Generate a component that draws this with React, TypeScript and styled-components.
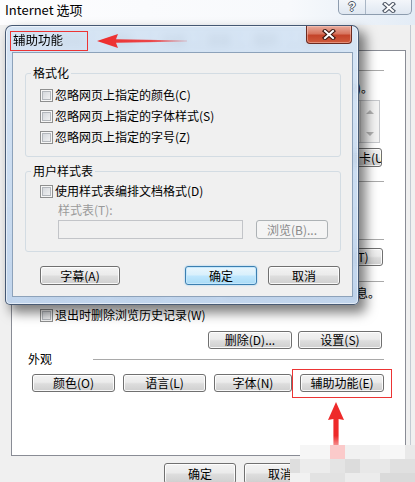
import React from "react";
import styled, { createGlobalStyle, css } from "styled-components";

const FONT = `"Noto Sans CJK SC", "Liberation Sans", sans-serif`;

const GlobalStyle = createGlobalStyle`
  html, body {
    margin: 0;
    padding: 0;
    background: #f0f0f0;
  }
  body {
    font-family: ${FONT};
    font-size: 12px;
    color: #000;
  }
`;

/* ---------- outer window ---------- */

const Window = styled.div`
  position: relative;
  width: 415px;
  height: 482px;
  overflow: hidden;
  background: #f0f0f0;
  display: flex;
  flex-direction: column;
  box-shadow: inset -4px 0 0 #f0f0f0, inset -5px 0 0 #c3cad2;
`;

const TitleBar = styled.div`
  flex: none;
  height: 25px;
  display: flex;
  align-items: flex-start;
  padding-left: 5px;
  background: linear-gradient(to right, #fdfdfe, #f7f9fc 70%, #e3ecf6);
`;

const TitleText = styled.span`
  margin-top: 2px;
  font-size: 13px;
  line-height: 16px;
`;

const CaptionButtons = styled.div`
  margin-left: auto;
  margin-right: 3px;
  height: 14px;
  display: flex;
  border: 1px solid #8d9cae;
  border-top: none;
  border-radius: 0 0 5px 5px;
  overflow: hidden;
  background: linear-gradient(#f3f6fa, #dfe7f1);
`;

const CaptionCell = styled.div<{ $w: number; $split?: boolean }>`
  width: ${(p) => p.$w}px;
  display: flex;
  align-items: center;
  justify-content: center;
  ${(p) => p.$split && "border-left: 1px solid #a9b6c5;"}
`;

const HelpGlyph = styled.span`
  font-family: "Liberation Sans", sans-serif;
  font-weight: bold;
  font-size: 12px;
  line-height: 12px;
  color: #fff;
  text-shadow: -1px 0 #4f5866, 1px 0 #4f5866, 0 -1px #4f5866, 0 1px #4f5866;
`;

const Body = styled.div`
  flex: none;
  display: flex;
  flex-direction: column;
  padding: 0 9px 0 11px;
`;

const TabStrip = styled.div`
  height: 25px;
  display: flex;
  align-items: flex-end;
  padding-left: 2px;
`;

const Tab = styled.div<{ $w: number; $active?: boolean }>`
  box-sizing: border-box;
  width: ${(p) => p.$w}px;
  height: ${(p) => (p.$active ? 22 : 20)}px;
  margin-right: -1px;
  border: 1px solid #898c95;
  border-bottom: none;
  text-align: center;
  line-height: 18px;
  background: ${(p) => (p.$active ? "#fff" : "linear-gradient(#f3f3f3, #e3e3e3)")};
`;

const TabPage = styled.div`
  box-sizing: border-box;
  height: 406px;
  border: 1px solid #898c95;
  background: #fff;
  padding: 12px 21px 0 16px;
  display: flex;
  flex-direction: column;
`;

const SectionHead = styled.div<{ $mt: number }>`
  display: grid;
  grid-template-columns: 65px 1fr;
  align-items: center;
  height: 14px;
  line-height: 14px;
  margin-top: ${(p) => p.$mt}px;
`;

const Rule = styled.div`
  height: 1px;
  background: #a9a9a9;
`;

const TextLine = styled.div<{
  $mt: number;
  $indent?: number;
  $right?: number;
  $muted?: boolean;
}>`
  height: 14px;
  line-height: 14px;
  white-space: nowrap;
  margin-top: ${(p) => p.$mt}px;
  padding-left: ${(p) => p.$indent ?? 0}px;
  ${(p) => p.$right !== undefined && `text-align: right; padding-right: ${p.$right}px;`}
  color: ${(p) => (p.$muted ? "#9a9a9a" : "#000")};
`;

const HomeBox = styled.div`
  box-sizing: border-box;
  height: 43px;
  margin: 5px 4px 0 48px;
  border: 1px solid #c6c8cc;
  display: flex;
`;

const HomeText = styled.div`
  flex: 1;
  padding: 1px 3px;
  line-height: 14px;
`;

const ScrollTrack = styled.div`
  width: 18px;
  border-left: 1px solid #dcdcdc;
  background: #f4f4f4;
  display: flex;
  flex-direction: column;
  align-items: center;
  justify-content: space-between;
  padding: 9px 0 6px;
`;

const ScrollArrow = styled.span<{ $down?: boolean }>`
  width: 0;
  height: 0;
  border-left: 4px solid transparent;
  border-right: 4px solid transparent;
  ${(p) =>
    p.$down ? "border-top: 4px solid #b4b4b4;" : "border-bottom: 4px solid #b4b4b4;"}
`;

const ButtonRow = styled.div<{
  $mt: number;
  $gap: number;
  $end?: boolean;
  $left?: number;
  $right?: number;
}>`
  display: flex;
  align-items: center;
  gap: ${(p) => p.$gap}px;
  justify-content: ${(p) => (p.$end ? "flex-end" : "flex-start")};
  margin-top: ${(p) => p.$mt}px;
  padding-left: ${(p) => p.$left ?? 0}px;
  padding-right: ${(p) => p.$right ?? 0}px;
`;

const RowText = styled.span`
  margin-right: auto;
  white-space: nowrap;
`;

type Tone = "normal" | "primary" | "disabled";

const Btn = styled.button<{ $w: number; $h?: number; $tone?: Tone; $push?: boolean }>`
  box-sizing: border-box;
  flex: none;
  width: ${(p) => p.$w}px;
  height: ${(p) => p.$h ?? 18}px;
  ${(p) => p.$push && "margin-right: auto;"}
  padding: 0;
  overflow: hidden;
  white-space: nowrap;
  font-family: ${FONT};
  font-size: 12px;
  line-height: 14px;
  color: #000;
  border: 1px solid #707070;
  border-radius: 3px;
  background: linear-gradient(#f3f3f3 0%, #ebebeb 45%, #dddddd 55%, #cfcfcf 100%);
  box-shadow: inset 0 0 0 1px rgba(255, 255, 255, 0.85);
  ${(p) =>
    p.$tone === "primary" &&
    css`
      border-color: #3c7fb1;
      background: linear-gradient(#eaf6fd 0%, #d9f0fc 45%, #bee6fd 55%, #a9dbf6 100%);
      box-shadow: inset 0 0 0 1px #c4e7fb, 0 0 2px #86c6ee;
    `}
  ${(p) =>
    p.$tone === "disabled" &&
    css`
      border-color: #adb2b5;
      background: #f4f4f4;
      color: #8a8a8a;
      box-shadow: none;
    `}
`;

const CheckRow = styled.div<{ $mt: number; $indent?: number }>`
  display: flex;
  align-items: center;
  gap: 2px;
  height: 14px;
  line-height: 14px;
  white-space: nowrap;
  margin-top: ${(p) => p.$mt}px;
  padding-left: ${(p) => p.$indent ?? 0}px;
`;

const CheckBox = styled.span`
  box-sizing: border-box;
  flex: none;
  width: 13px;
  height: 13px;
  border: 1px solid #8e8f8f;
  background: linear-gradient(135deg, #cdd1d6, #f7f7f7);
  box-shadow: inset 0 0 0 1px #f6f6f6, inset 0 0 0 2px #b3b7bc;
`;

const Radio = styled.span`
  box-sizing: border-box;
  flex: none;
  width: 13px;
  height: 13px;
  border-radius: 50%;
  border: 1px solid #8e8f8f;
  background: radial-gradient(circle at 40% 40%, #f7f7f7, #cdd1d6);
`;

const Footer = styled.div`
  display: flex;
  justify-content: flex-end;
  gap: 8px;
  padding: 7px 10px 0 0;
`;

/* ---------- accessibility dialog ---------- */

const Dialog = styled.div`
  position: absolute;
  left: 5px;
  top: 25px;
  width: 354px;
  height: 280px;
  box-sizing: border-box;
  border: 1px solid rgba(38, 56, 84, 0.8);
  border-radius: 7px 7px 5px 5px;
  padding: 0 5px 7px 6px;
  display: flex;
  flex-direction: column;
  background: linear-gradient(rgba(212, 228, 245, 0.9), rgba(190, 211, 236, 0.94));
  backdrop-filter: blur(4px);
  box-shadow: 6px 7px 12px 1px rgba(0, 0, 0, 0.5), inset 0 0 0 1px rgba(255, 255, 255, 0.55);
`;

const DialogTitle = styled.div`
  height: 26px;
  display: flex;
  align-items: center;
  padding-left: 1px;
`;

const DialogTitleText = styled.span`
  font-size: 12.5px;
  line-height: 16px;
  margin-top: 1px;
`;

const CloseButton = styled.div`
  align-self: flex-start;
  margin-left: auto;
  margin-right: 1px;
  box-sizing: border-box;
  width: 46px;
  height: 18px;
  display: flex;
  align-items: center;
  justify-content: center;
  border: 1px solid #6b2a20;
  border-top: none;
  border-radius: 0 0 4px 4px;
  background: linear-gradient(#e9ab9c 0%, #d7755f 45%, #c4442a 55%, #cf5a3c 100%);
  box-shadow: inset 0 0 0 1px rgba(255, 210, 200, 0.45);
`;

const Client = styled.div`
  flex: 1;
  box-sizing: border-box;
  border: 1px solid #8da2ba;
  background: #f0f0f0;
  padding: 0 11px 0 12px;
  display: flex;
  flex-direction: column;
`;

const Group = styled.fieldset<{ $mt: number }>`
  margin: ${(p) => p.$mt}px 0 0 0;
  padding: 0 0 12px 0;
  min-width: 0;
  border: 1px solid #d3dce3;
  border-radius: 3px;
`;

const Legend = styled.legend`
  margin-left: 5px;
  padding: 0 2px;
  line-height: 14px;
  font-size: 12px;
`;

const GroupBody = styled.div`
  padding-left: 14px;
`;

const TextInput = styled.div`
  box-sizing: border-box;
  width: 185px;
  height: 19px;
  border: 1px solid #c2c4c8;
  background: #f0f0f0;
`;

/* ---------- annotations ---------- */

const RedFrame = styled.div<{ $x: number; $y: number; $w: number; $h: number }>`
  position: absolute;
  left: ${(p) => p.$x}px;
  top: ${(p) => p.$y}px;
  width: ${(p) => p.$w}px;
  height: ${(p) => p.$h}px;
  box-sizing: border-box;
  border: 1.5px solid #ec3434;
  pointer-events: none;
`;

const Overlay = styled.svg<{ $x: number; $y: number }>`
  position: absolute;
  left: ${(p) => p.$x}px;
  top: ${(p) => p.$y}px;
  pointer-events: none;
`;

const CloseGlyph = ({ dark }: { dark: string }) => (
  <svg width="14" height="11" viewBox="0 0 14 11">
    <path d="M3 2 L11 9 M11 2 L3 9" stroke={dark} strokeWidth="4.2" strokeLinecap="square" />
    <path d="M3 2 L11 9 M11 2 L3 9" stroke="#fff" strokeWidth="2" strokeLinecap="square" />
  </svg>
);

const tabs: [string, number, boolean?][] = [
  ["常规", 38, true],
  ["安全", 44],
  ["隐私", 58],
  ["内容", 48],
  ["连接", 44],
  ["程序", 52],
  ["高级", 48],
];

const mosaic: [number, number, number, number, string][] = [
  [10, 0, 30, 14, "#f6f6f6"],
  [40, 0, 15, 14, "#fbcaca"],
  [55, 0, 35, 14, "#f1f1f1"],
  [90, 0, 25, 14, "#f7f7f7"],
  [115, 0, 10, 14, "#e9e9e9"],
  [0, 14, 10, 14, "#dedede"],
  [10, 14, 30, 14, "#ececec"],
  [40, 14, 15, 14, "#e4e4e4"],
  [55, 14, 15, 14, "#dcdcdc"],
  [70, 14, 30, 14, "#e8e8e8"],
  [100, 14, 25, 14, "#e0e0e0"],
  [0, 28, 20, 9, "#f1f1f1"],
  [20, 28, 35, 9, "#e2e2e2"],
  [55, 28, 35, 9, "#ececec"],
  [90, 28, 35, 9, "#dadada"],
];

export default function App() {
  return (
    <Window>
      <GlobalStyle />
      <TitleBar>
        <TitleText>Internet 选项</TitleText>
        <CaptionButtons>
          <CaptionCell $w={26}>
            <HelpGlyph>?</HelpGlyph>
          </CaptionCell>
          <CaptionCell $w={45} $split>
            <CloseGlyph dark="#4f5866" />
          </CaptionCell>
        </CaptionButtons>
      </TitleBar>

      <Body>
        <TabStrip>
          {tabs.map(([label, w, active]) => (
            <Tab key={label} $w={w} $active={active}>
              {label}
            </Tab>
          ))}
        </TabStrip>

        <TabPage>
          <SectionHead $mt={0}>
            <span>主页</span>
            <Rule />
          </SectionHead>
          <TextLine $mt={4} $right={11}>
            若要创建多个主页选项卡，请在每行键入一个地址(R)。
          </TextLine>
          <HomeBox>
            <HomeText>http://www.baidu.com/</HomeText>
            <ScrollTrack>
              <ScrollArrow />
              <ScrollArrow $down />
            </ScrollTrack>
          </HomeBox>
          <ButtonRow $mt={5} $gap={6} $end $right={2}>
            <Btn $w={84} $h={19}>使用当前页(C)</Btn>
            <Btn $w={84} $h={19}>使用默认值(F)</Btn>
            <Btn $w={84} $h={19}>使用新选项卡(U)</Btn>
          </ButtonRow>

          <SectionHead $mt={7}>
            <span>启动</span>
            <Rule />
          </SectionHead>
          <CheckRow $mt={5} $indent={12}>
            <Radio />
            从上次会话中的选项卡开始(B)
          </CheckRow>
          <CheckRow $mt={4} $indent={12}>
            <Radio />
            从主页开始(H)
          </CheckRow>

          <SectionHead $mt={7}>
            <span>选项卡</span>
            <Rule />
          </SectionHead>
          <ButtonRow $mt={2} $gap={6} $left={12} $right={1}>
            <RowText>更改网页在选项卡中的显示方式。</RowText>
            <Btn $w={80}>选项卡(T)</Btn>
          </ButtonRow>

          <SectionHead $mt={1}>
            <span>浏览历史记录</span>
            <Rule />
          </SectionHead>
          <TextLine $mt={5} $right={4}>
            删除临时文件、历史记录、Cookie、保存的密码和网页表单信息。
          </TextLine>
          <CheckRow $mt={8} $indent={12}>
            <CheckBox />
            退出时删除浏览历史记录(W)
          </CheckRow>
          <ButtonRow $mt={9} $gap={6} $end $right={2}>
            <Btn $w={84}>删除(D)...</Btn>
            <Btn $w={84}>设置(S)</Btn>
          </ButtonRow>

          <SectionHead $mt={3}>
            <span>外观</span>
            <Rule />
          </SectionHead>
          <ButtonRow $mt={8} $gap={8} $left={4}>
            <Btn $w={83}>颜色(O)</Btn>
            <Btn $w={83}>语言(L)</Btn>
            <Btn $w={78}>字体(N)</Btn>
            <Btn $w={84}>辅助功能(E)</Btn>
          </ButtonRow>
        </TabPage>

        <Footer>
          <Btn $w={72} $h={21}>确定</Btn>
          <Btn $w={72} $h={21}>取消</Btn>
          <Btn $w={72} $h={21}>应用(A)</Btn>
        </Footer>
      </Body>

      <Dialog>
        <DialogTitle>
          <DialogTitleText>辅助功能</DialogTitleText>
          <CloseButton>
            <CloseGlyph dark="#3b1710" />
          </CloseButton>
        </DialogTitle>
        <Client>
          <Group $mt={13}>
            <Legend>格式化</Legend>
            <GroupBody>
              <CheckRow $mt={8}>
                <CheckBox />
                忽略网页上指定的颜色(C)
              </CheckRow>
              <CheckRow $mt={7}>
                <CheckBox />
                忽略网页上指定的字体样式(S)
              </CheckRow>
              <CheckRow $mt={7}>
                <CheckBox />
                忽略网页上指定的字号(Z)
              </CheckRow>
            </GroupBody>
          </Group>
          <Group $mt={7}>
            <Legend>用户样式表</Legend>
            <GroupBody>
              <CheckRow $mt={6}>
                <CheckBox />
                使用样式表编排文档格式(D)
              </CheckRow>
              <TextLine $mt={5} $indent={18} $muted>
                样式表(T):
              </TextLine>
              <ButtonRow $mt={3} $gap={13} $left={18}>
                <TextInput />
                <Btn $w={72} $h={19} $tone="disabled">
                  浏览(B)...
                </Btn>
              </ButtonRow>
            </GroupBody>
          </Group>
          <ButtonRow $mt={14} $gap={11} $left={15} $right={1}>
            <Btn $w={80} $h={19} $push>
              字幕(A)
            </Btn>
            <Btn $w={72} $h={19} $tone="primary">
              确定
            </Btn>
            <Btn $w={72} $h={19}>
              取消
            </Btn>
          </ButtonRow>
        </Client>
      </Dialog>

      <RedFrame $x={10} $y={31} $w={78} $h={20} />
      <RedFrame $x={292} $y={369} $w={100} $h={29} />

      <Overlay $x={95} $y={32} width="95" height="18" viewBox="0 0 95 18">
        <defs>
          <linearGradient id="tailFade" x1="0" x2="1" y1="0" y2="0">
            <stop offset="0" stopColor="#ee2a2a" />
            <stop offset="0.6" stopColor="#ee2a2a" stopOpacity="0.85" />
            <stop offset="1" stopColor="#ee2a2a" stopOpacity="0.2" />
          </linearGradient>
        </defs>
        <polygon points="2,9 23,2 21,7.3 92,8.4 92,9.6 21,10.7 23,16" fill="url(#tailFade)" />
      </Overlay>

      <Overlay $x={326} $y={400} width="20" height="48" viewBox="0 0 20 48">
        <defs>
          <linearGradient id="shaftFade" x1="0" x2="0" y1="0" y2="1">
            <stop offset="0" stopColor="#ee2a2a" />
            <stop offset="0.75" stopColor="#ee2a2a" />
            <stop offset="1" stopColor="#f7a0a0" />
          </linearGradient>
        </defs>
        <polygon points="10,2 18,20 12.6,19 12.6,47 7.4,47 7.4,19 2,20" fill="url(#shaftFade)" />
      </Overlay>

      <Overlay $x={290} $y={445} width="125" height="37" viewBox="0 0 125 37">
        {mosaic.map(([x, y, w, h, c], i) => (
          <rect key={i} x={x} y={y} width={w} height={h} fill={c} />
        ))}
      </Overlay>
    </Window>
  );
}
